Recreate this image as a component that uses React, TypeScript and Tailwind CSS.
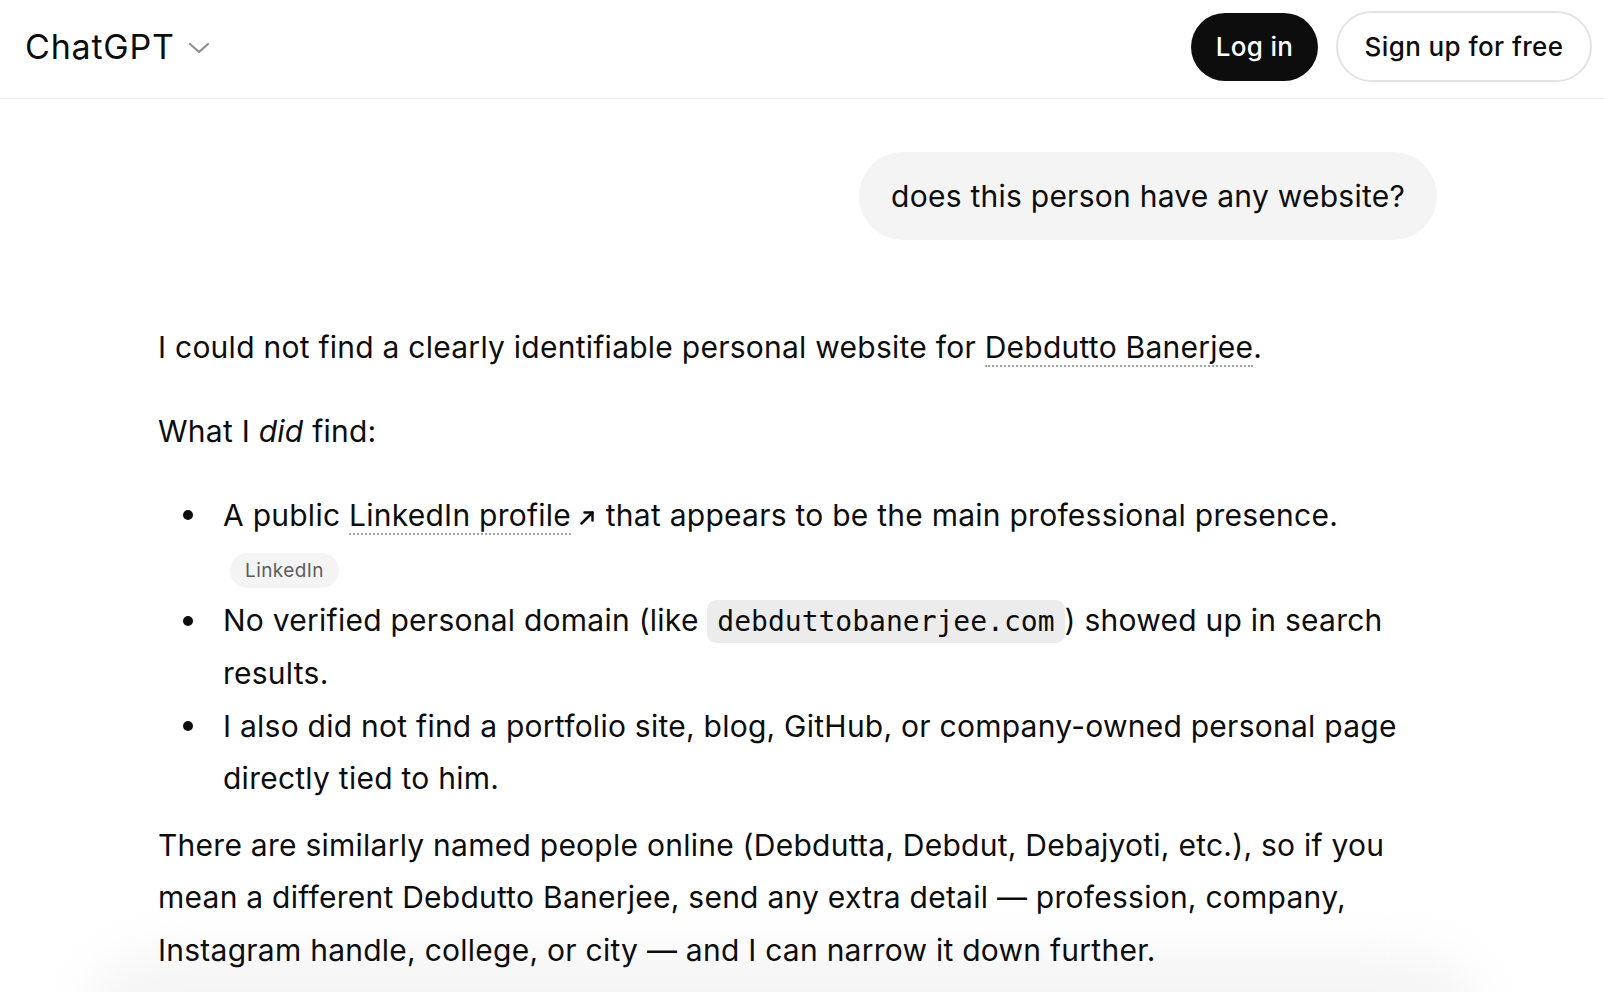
import { FC, ReactNode } from 'react';

const font = { fontFamily: 'Inter, "Noto Sans", sans-serif' };

const Cite: FC<{ children: ReactNode }> = ({ children }) => (
  <span className="border-b-2 border-dotted border-[#a3a3a3]">{children}</span>
);

const ArrowUpRight = () => (
  <svg
    className="ml-[7px] inline-block align-middle"
    width="19"
    height="19"
    viewBox="0 0 19 19"
    fill="none"
    stroke="#0d0d0d"
    strokeWidth="2.5"
    strokeLinecap="round"
    strokeLinejoin="round"
  >
    <path d="M3.5 15.5 L14.5 4.5" />
    <path d="M6.5 4.5 H14.5 V12.5" />
  </svg>
);

const Bullet: FC<{ children: ReactNode }> = ({ children }) => (
  <li className="mb-[1px] grid grid-cols-[65px_1fr]">
    <span className="flex h-[52.2px] items-center pl-[25px]">
      <span className="h-[10px] w-[10px] rounded-full bg-[#0d0d0d]" />
    </span>
    <div>{children}</div>
  </li>
);

const Header = () => (
  <header className="flex h-[99px] items-center justify-between border-b border-[#ececec] pb-[5px] pl-[25px] pr-[12px]">
    <div className="flex items-center gap-[13px]">
      <span className="text-[34px] font-normal tracking-[0.8px] text-[#0d0d0d]">ChatGPT</span>
      <svg width="22" height="14" viewBox="0 0 22 14" fill="none" stroke="#8f8f8f" strokeWidth="2.2" strokeLinecap="round" strokeLinejoin="round" className="mt-[2px]">
        <path d="M2 3 L11 11 L20 3" />
      </svg>
    </div>
    <div className="flex items-center gap-[18px]">
      <button className="flex h-[68px] w-[127px] items-center justify-center rounded-full bg-[#0d0d0d] text-[26px] font-medium tracking-[0.3px] text-white">
        Log in
      </button>
      <button className="flex h-[71px] w-[256px] items-center justify-center rounded-full border-2 border-[#e3e3e3] bg-white text-[26px] font-medium tracking-[0.4px] text-[#0d0d0d]">
        Sign up for free
      </button>
    </div>
  </header>
);

export default function App() {
  return (
    <div className="relative h-[992px] w-full overflow-hidden bg-white text-[#0d0d0d]" style={font}>
      <div className="pointer-events-none absolute left-[80px] right-[120px] top-[950px] h-[160px] rounded-[80px] bg-[#f5f5f5] blur-[24px]" />
      <div className="relative">
        <Header />
        <main className="ml-[158px] w-[1279px] pt-[53px] text-[30px] leading-[52.2px] tracking-[0.25px]">
          <div className="flex justify-end">
            <div className="rounded-full bg-[#f4f4f4] px-[32px] py-[18px] leading-[52px]">
              does this person have any website?
            </div>
          </div>

          <div className="mt-[81px]">
            <p className="mb-[31.8px]">
              I could not find a clearly identifiable personal website for <Cite>Debdutto Banerjee</Cite>.
            </p>
            <p className="mb-[31.8px]">
              What I <em>did</em> find:
            </p>
            <ul className="mb-[15px]">
              <Bullet>
                A public <Cite>LinkedIn profile</Cite>
                <ArrowUpRight /> that appears to be the main professional presence.
                <br />
                <span className="ml-[7px] inline-flex h-[35px] items-center rounded-full bg-[#f4f4f4] px-[15px] align-middle text-[19px] leading-none tracking-[0.4px] text-[#5d5d5d]">
                  LinkedIn
                </span>
              </Bullet>
              <Bullet>
                No verified personal domain (like{' '}
                <code
                  className="rounded-[9px] bg-[#ececec] px-[10px] py-[5px] text-[28px] leading-none tracking-normal"
                  style={{ fontFamily: '"DejaVu Sans Mono", "Liberation Mono", monospace' }}
                >
                  debduttobanerjee.com
                </code>
                ) showed up in search results.
              </Bullet>
              <Bullet>
                I also did not find a portfolio site, blog, GitHub, or company-owned personal page directly tied to him.
              </Bullet>
            </ul>
            <p>
              There are similarly named people online (Debdutta, Debdut, Debajyoti, etc.), so if you mean a different
              Debdutto Banerjee, send any extra detail — profession, company, Instagram handle, college, or city — and I
              can narrow it down further.
            </p>
          </div>
        </main>
      </div>
    </div>
  );
}
